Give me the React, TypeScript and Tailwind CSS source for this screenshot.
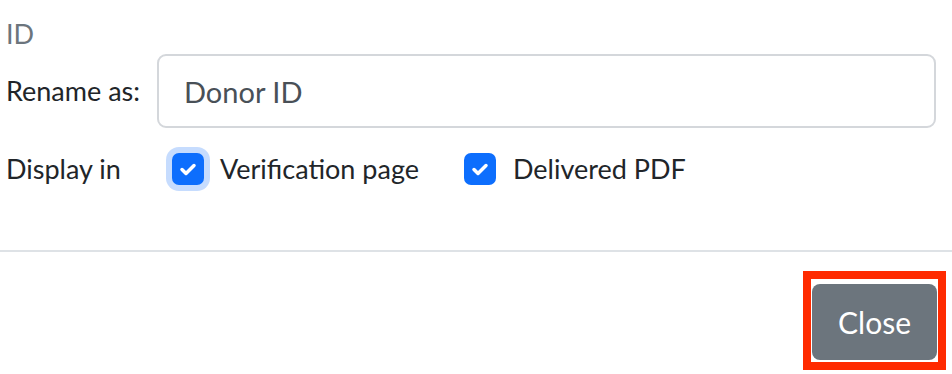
export default function App() {
  return (
    <div
      className="w-[952px] h-[374px] bg-white text-[#212529] text-[27px] overflow-hidden"
      style={{ fontFamily: "Lato, 'Noto Sans', sans-serif" }}
    >
      <div className="pl-[6px] pr-[16px]">
        <div className="h-[41px] mt-[14px] flex items-center text-[#6c757d]">ID</div>
        <div className="flex items-center h-[74px] -mt-[1px]">
          <label className="w-[151px] shrink-0">Rename as:</label>
          <input
            type="text"
            defaultValue="Donor ID"
            className="flex-1 h-full border-2 border-[#d4d7db] rounded-[9px] pl-[25px] text-[29px] text-[#495057] outline-none"
          />
        </div>
        <div className="flex items-center h-[40px] mt-[21px]">
          <span className="w-[166px] shrink-0">Display in</span>
          <label className="flex items-center">
            <Check focused />
            <span className="ml-[16px]">Verification page</span>
          </label>
          <label className="flex items-center ml-[45px]">
            <Check />
            <span className="ml-[17px]">Delivered PDF</span>
          </label>
        </div>
      </div>
      <div className="mt-[61px] border-t-2 border-[#dee2e6]" />
      <div className="flex justify-end pt-[19px] pr-[6px]">
        <div className="border-8 border-[#ff2a00] pt-[5px] pb-[2px] px-[1px]">
          <button className="w-[125px] h-[76px] rounded-[8px] bg-[#6c757d] text-white text-[30px]">
            Close
          </button>
        </div>
      </div>
    </div>
  );
}

function Check({ focused = false }: { focused?: boolean }) {
  return (
    <span
      className={
        focused
          ? "flex items-center justify-center w-[32px] h-[32px] rounded-[7px] bg-[#0d6efd] ring-[6px] ring-[#c6dcfe]"
          : "flex items-center justify-center w-[32px] h-[32px] rounded-[7px] bg-[#0d6efd]"
      }
    >
      <svg width="18" height="16" viewBox="0 0 18 16" fill="none">
        <path d="M3 8.5l4 4l8-8" stroke="white" strokeWidth="3.5" strokeLinecap="round" strokeLinejoin="round" />
      </svg>
    </span>
  );
}
